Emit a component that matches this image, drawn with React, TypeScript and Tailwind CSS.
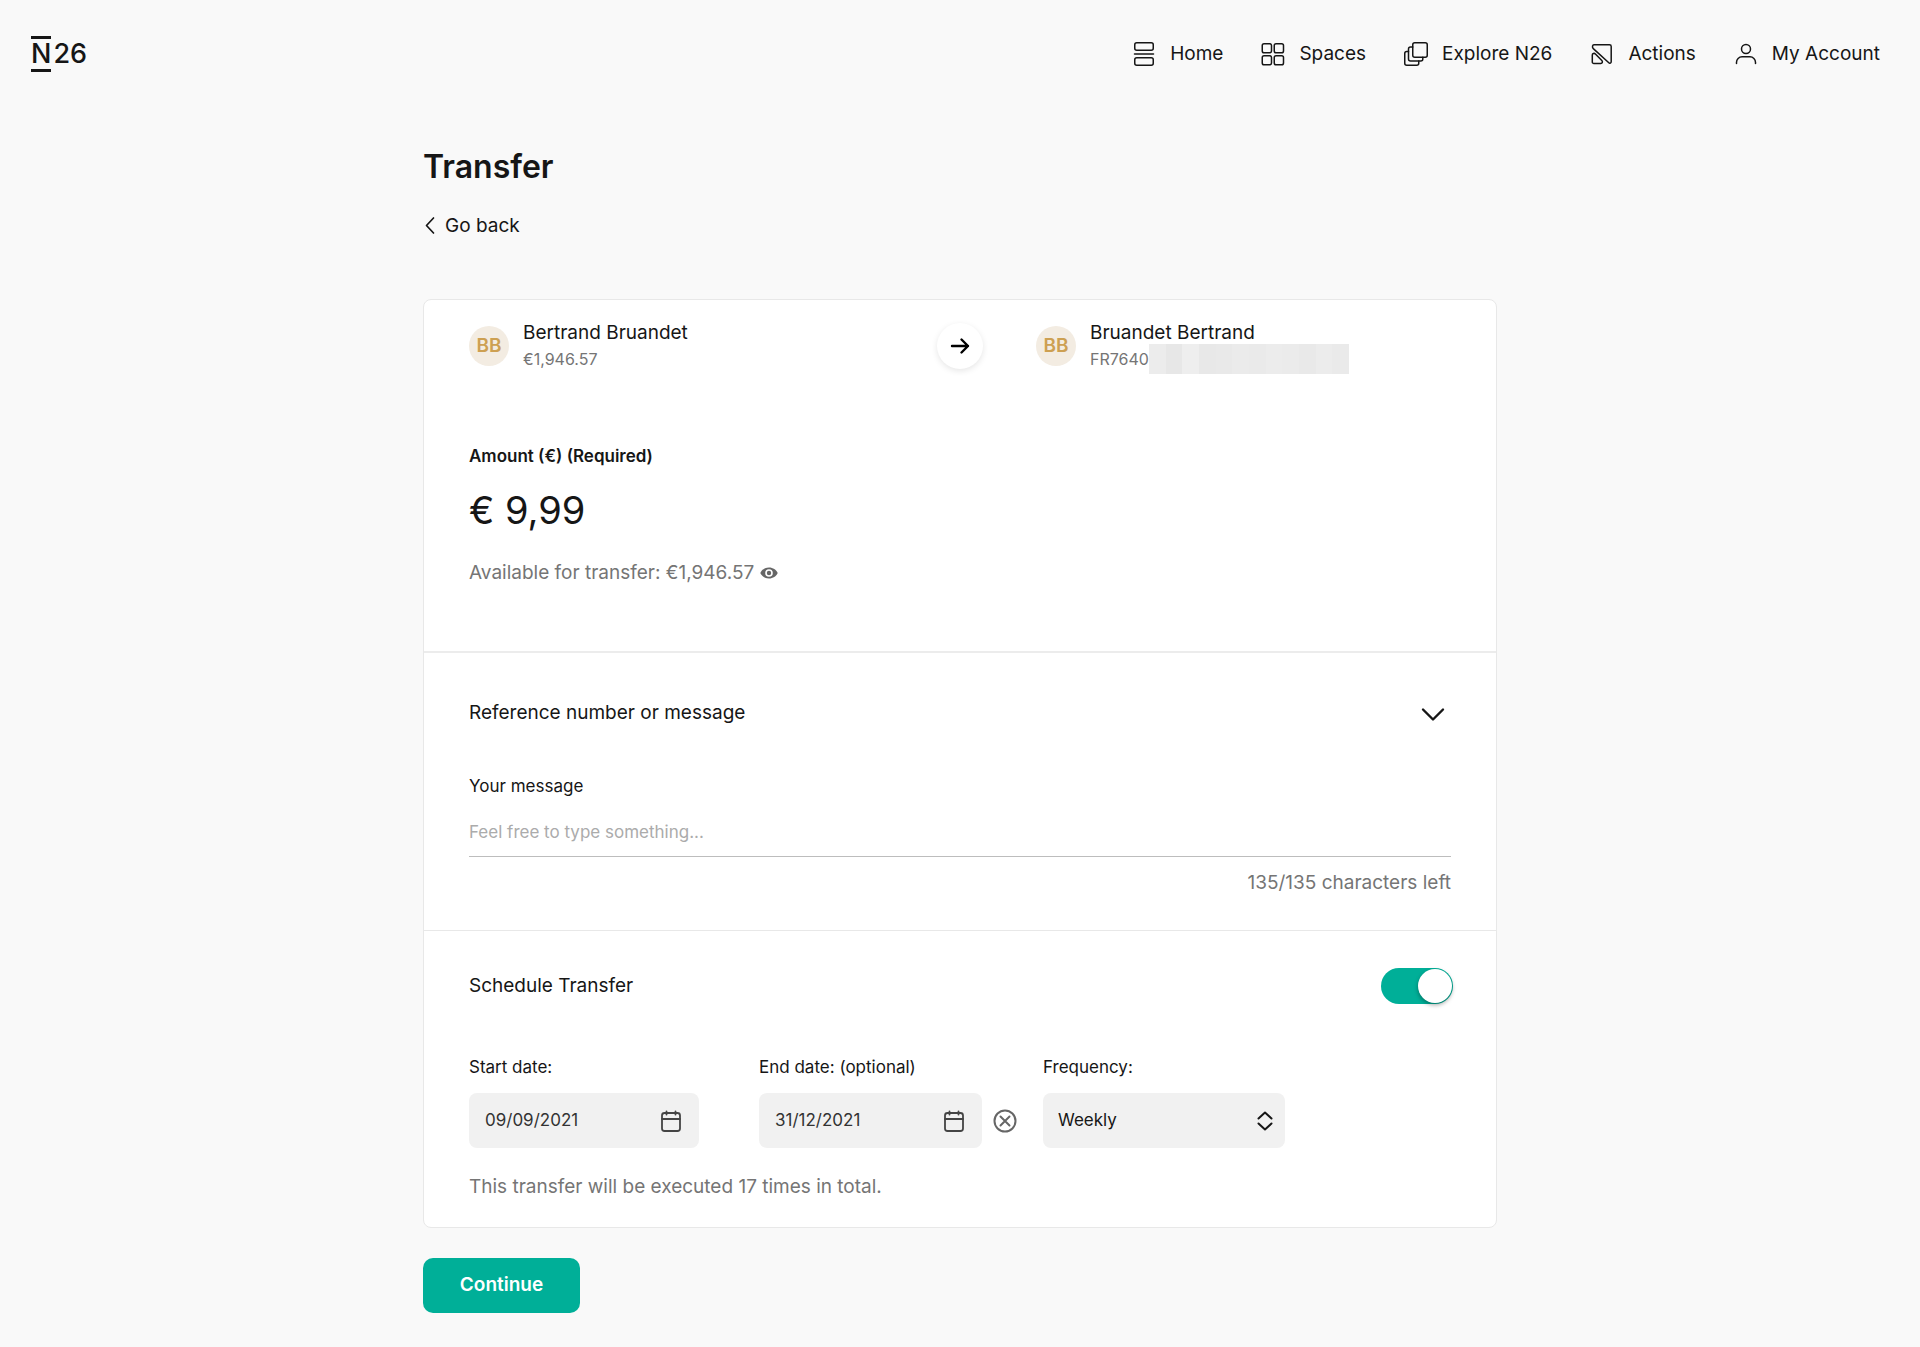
import { useState, type ReactNode } from "react";

function Stroke({ children, className = "size-6", width = 1.5 }: { children: ReactNode; className?: string; width?: number }) {
  return (
    <svg
      aria-hidden="true"
      viewBox="0 0 24 24"
      className={`shrink-0 ${className}`}
      fill="none"
      stroke="currentColor"
      strokeWidth={width}
      strokeLinecap="round"
      strokeLinejoin="round"
    >
      {children}
    </svg>
  );
}

const navItems = [
  {
    label: "Home",
    icon: (
      <>
        <rect x="2.75" y="0.75" width="18.5" height="7.5" rx="2" />
        <path d="M2.5 12h19" />
        <rect x="2.75" y="15.75" width="18.5" height="7.5" rx="2" />
      </>
    ),
  },
  {
    label: "Spaces",
    icon: (
      <>
        <rect x="1.25" y="1.75" width="9.25" height="9" rx="1.8" />
        <rect x="13.25" y="1.75" width="9.25" height="9" rx="1.8" />
        <rect x="1.25" y="13.75" width="9.25" height="9" rx="1.8" />
        <rect x="13.25" y="13.75" width="9.25" height="9" rx="1.8" />
      </>
    ),
  },
  {
    label: "Explore N26",
    icon: (
      <>
        <rect x="8.75" y="0.75" width="14.5" height="14.5" rx="2" />
        <path d="M8.75 5H6.5a2 2 0 0 0-2 2v10a2 2 0 0 0 2 2h10.3a2 2 0 0 0 2-2v-1.75" />
        <path d="M4.5 9.5H2.75a2 2 0 0 0-2 2v9.75a2 2 0 0 0 2 2h10a2 2 0 0 0 2-2V19" />
      </>
    ),
  },
  {
    label: "Actions",
    icon: (
      <>
        <path d="M4 2.75h15.5a1.7 1.7 0 0 1 1.7 1.7v15.3c0 1.3-1.5 1.9-2.4 1L3.3 6.6C1.9 5.3 2.4 2.75 4 2.75Z" />
        <path d="M5.4 12 11.8 18.6c1.2 1.3.5 2.9-1 2.9H3.9a1.6 1.6 0 0 1-1.6-1.6v-6.8c0-1.6 1.9-2.3 3.1-1.1Z" />
      </>
    ),
  },
  {
    label: "My Account",
    icon: (
      <>
        <circle cx="12" cy="7" r="4.5" />
        <path d="M2.5 21.5v-1.2a5.5 5.5 0 0 1 5.5-5.5h8a5.5 5.5 0 0 1 5.5 5.5v1.2" />
      </>
    ),
  },
];

function Header() {
  return (
    <header className="flex h-[108px] items-center justify-between pr-10 pl-[31px]">
      <a href="#home" aria-label="N26 home" className="flex text-[27px] leading-9 font-medium">
        <span className="flex h-9 items-center border-y-3 border-[#161616]">N</span>
        <span className="flex h-9 items-center pl-0.5">26</span>
      </a>
      <nav aria-label="Main" className="flex items-center gap-[38px]">
        {navItems.map((item) => (
          <a key={item.label} href="#" className="flex items-center gap-3.5 text-[19px] leading-7">
            <Stroke>{item.icon}</Stroke>
            {item.label}
          </a>
        ))}
      </nav>
    </header>
  );
}

function Party({ name, detail, children }: { name: string; detail: string; children?: ReactNode }) {
  return (
    <div className="flex items-center gap-3.5">
      <span className="flex size-10 items-center justify-center rounded-full bg-[#f3ece2] text-[19px] font-semibold text-[#cda052]">BB</span>
      <div>
        <p className="text-[19px] leading-[26px]">{name}</p>
        <p className="flex items-center text-base leading-[26px] text-[#757575]">
          {detail}
          {children}
        </p>
      </div>
    </div>
  );
}

const maskShades = [
  "bg-[#ececec]", "bg-[#e7e7e7]", "bg-[#eeeeee]", "bg-[#e8e8e8]", "bg-[#e9e9e9]", "bg-[#ebebeb]",
  "bg-[#eaeaea]", "bg-[#ececec]", "bg-[#ebebeb]", "bg-[#e9e9e9]", "bg-[#ececec]", "bg-[#eaeaea]",
];

function Mask() {
  return (
    <span role="img" className="-my-0.5 flex h-[30px] w-[200px]" aria-label="Hidden digits">
      {maskShades.map((shade, i) => (
        <span key={i} className={`flex-1 ${shade}`} />
      ))}
    </span>
  );
}

function DateField({ id, value }: { id: string; value: string }) {
  return (
    <div className="flex h-[55px] min-w-0 flex-1 items-center rounded-lg bg-[#f1f1f1] px-4">
      <input id={id} defaultValue={value} className="w-full min-w-0 bg-transparent text-[17px] text-[#333] outline-none" />
      <button type="button" aria-label="Open calendar">
        <Stroke className="size-6 text-[#444]" width={1.8}>
          <rect x="3" y="4" width="18" height="18" rx="2.5" />
          <path d="M3 10h18M7.5 2.5v3M16.500 2.5v3" />
        </Stroke>
      </button>
    </div>
  );
}

export default function App() {
  const [scheduled, setScheduled] = useState(true);
  const [message, setMessage] = useState("");

  return (
    <div className="min-h-screen bg-[#f9f9f9] font-['Inter',sans-serif] text-[#161616]">
      <Header />
      <main className="mx-auto max-w-[1074px] pt-9 pb-8">
        <h1 className="text-[32px] leading-[46px] font-semibold">Transfer</h1>
        <a href="#back" className="mt-[22px] flex items-center gap-2 text-[19px] leading-7">
          <svg aria-hidden="true" viewBox="0 0 14 20" className="h-5 w-3.5" fill="none" stroke="currentColor" strokeWidth="1.7" strokeLinecap="round" strokeLinejoin="round">
            <path d="M10.5 2 3.5 9.5l7 7.500" />
          </svg>
          Go back
        </a>

        <form className="mt-[59px]">
          <div className="rounded-lg border border-[#e8e8e8] bg-white">
            <section className="border-b-2 border-[#ececec] px-[45px] pt-5 pb-16">
              <div className="grid grid-cols-[1fr_auto_1fr] items-center">
                <Party name="Bertrand Bruandet" detail="€1,946.57" />
                <span className="flex size-[46px] items-center justify-center rounded-full bg-white shadow-[0_2px_6px_rgba(0,0,0,0.1)]">
                  <svg aria-hidden="true" viewBox="0 0 24 24" className="size-6" fill="none" stroke="#000" strokeWidth="2.4" strokeLinecap="round" strokeLinejoin="round">
                    <path d="M4 12h16M13.500 5.500 20 12l-6.500 6.500" />
                  </svg>
                </span>
                <div className="pl-[53px]">
                  <Party name="Bruandet Bertrand" detail="FR7640">
                    <Mask />
                  </Party>
                </div>
              </div>
              <label htmlFor="amount" className="mt-[70px] block text-[17px] leading-7 font-semibold">
                Amount (€) (Required)
              </label>
              <input id="amount" defaultValue="€ 9,99" className="mt-3 block h-14 w-full bg-transparent text-[38px] outline-none" />
              <p className="mt-[21px] flex items-center gap-1.5 text-[19px] leading-7 text-[#757575]">
                Available for transfer: €1,946.57
                <button type="button" aria-label="Hide balance">
                  <svg aria-hidden="true" viewBox="0 0 18 12" className="h-3 w-[18px]" fill="#666">
                    <path fillRule="evenodd" d="M9 .5C5 .5 1.8 2.8.3 6c1.5 3.2 4.7 5.5 8.7 5.5s7.2-2.3 8.7-5.5C16.2 2.8 13 .5 9 .5Zm0 9.300a3.800 3.800 0 1 1 0-7.600 3.800 3.800 0 0 1 0 7.600Z" />
                    <circle cx="9" cy="6" r="2.2" />
                  </svg>
                </button>
              </p>
            </section>

            <section className="border-b border-[#e8e8e8] px-[45px] pt-[46px] pb-[33px]">
              <h2>
                <button type="button" aria-expanded="true" className="flex w-full items-center justify-between pr-1.5 text-[19px] leading-7">
                  Reference number or message
                  <Stroke width={2.4}>
                    <path d="M2 8.500 12 18.500 22 8.500" />
                  </Stroke>
                </button>
              </h2>
              <label htmlFor="message" className="mt-[45px] block text-[17px] leading-7">Your message</label>
              <input
                id="message"
                maxLength={135}
                value={message}
                onChange={(e) => setMessage(e.target.value)}
                placeholder="Feel free to type something..."
                className="mt-2 block h-[49px] w-full border-b border-[#bdbdbd] bg-transparent text-[17px] outline-none placeholder:text-[#ababab]"
              />
              <p className="mt-3 text-right text-[19px] leading-7 text-[#757575]">{135 - message.length}/135 characters left</p>
            </section>

            <section className="px-[45px] pt-[37px] pb-[26px]">
              <div className="-mr-0.5 flex items-center justify-between">
                <label htmlFor="schedule" className="text-[19px] leading-7">Schedule Transfer</label>
                <span className="flex h-9 w-[72px] items-center rounded-full bg-[#00af98] p-px">
                  <input
                    id="schedule"
                    type="checkbox"
                    role="switch"
                    checked={scheduled}
                    onChange={(e) => setScheduled(e.target.checked)}
                    className="size-[34px] appearance-none rounded-full bg-white shadow-[0_2px_4px_rgba(0,0,0,0.35)] checked:ml-auto"
                  />
                </span>
              </div>
              <div className="mt-[49px] flex flex-wrap">
                <div className="w-[290px] pr-[60px]">
                  <label htmlFor="start" className="block text-[17px] leading-7">Start date:</label>
                  <div className="mt-3 flex">
                    <DateField id="start" value="09/09/2021" />
                  </div>
                </div>
                <div className="w-[284px] pr-[26px]">
                  <label htmlFor="end" className="block text-[17px] leading-7">End date: (optional)</label>
                  <div className="mt-3 flex items-center gap-[11px]">
                    <DateField id="end" value="31/12/2021" />
                    <button type="button" aria-label="Clear end date">
                      <Stroke className="size-6 text-[#666]" width={2}>
                        <circle cx="12" cy="12" r="10.5" />
                        <path d="m7.5 7.5 9 9M16.5 7.5l-9 9" />
                      </Stroke>
                    </button>
                  </div>
                </div>
                <div className="w-[242px]">
                  <label htmlFor="frequency" className="block text-[17px] leading-7">Frequency:</label>
                  <div className="mt-3 grid items-center">
                    <select id="frequency" defaultValue="Weekly" className="col-start-1 row-start-1 h-[55px] w-full appearance-none rounded-lg bg-[#f1f1f1] px-[15px] text-[17px] outline-none">
                      <option>Weekly</option>
                      <option>Monthly</option>
                    </select>
                    <Stroke className="pointer-events-none col-start-1 row-start-1 mr-2 size-6 justify-self-end" width={2}>
                      <path d="M5.5 9.5 12 3.5l6.5 6M5.5 14.500l6.5 6 6.5-6" />
                    </Stroke>
                  </div>
                </div>
              </div>
              <p className="mt-[25px] text-[19px] leading-7 text-[#757575]">This transfer will be executed 17 times in total.</p>
            </section>
          </div>
          <button type="button" className="mt-[30px] h-[55px] w-[157px] rounded-[10px] bg-[#00af98] text-[19px] font-semibold text-white">
            Continue
          </button>
        </form>
      </main>
    </div>
  );
}
